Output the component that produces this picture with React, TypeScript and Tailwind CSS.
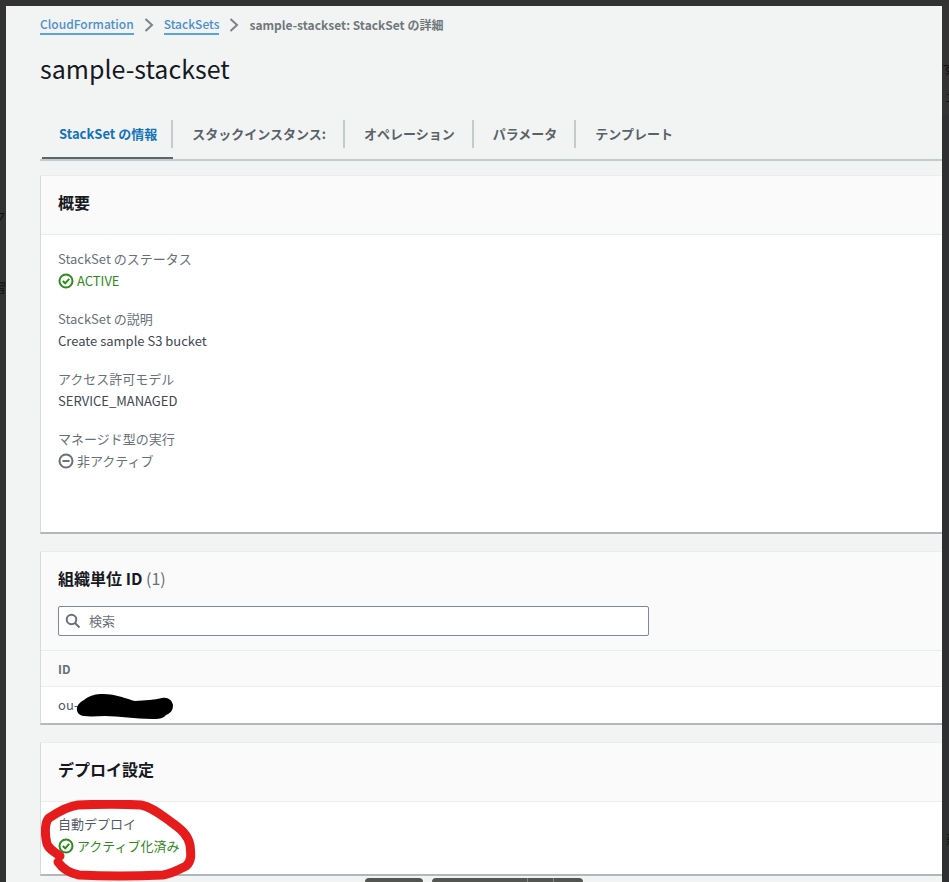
import React from "react";

type Status = "success" | "inactive";

type Field = { label: string; value: string; status?: Status };

const tabs = ["スタックインスタンス:", "オペレーション", "パラメータ", "テンプレート"];

const overview: Field[] = [
  { label: "StackSet のステータス", value: "ACTIVE", status: "success" },
  { label: "StackSet の説明", value: "Create sample S3 bucket" },
  { label: "アクセス許可モデル", value: "SERVICE_MANAGED" },
  { label: "マネージド型の実行", value: "非アクティブ", status: "inactive" },
];

function StatusIcon({ status }: { status: Status }) {
  return (
    <svg viewBox="0 0 16 16" className="size-4 shrink-0" fill="none" stroke="currentColor" strokeWidth="2" aria-hidden="true">
      <circle cx="8" cy="8" r="6.5" />
      {status === "success" ? <path d="M4.8 8 7.2 10.3 11.2 5.9" /> : <path d="M4.5 8h7" />}
    </svg>
  );
}

function Chevron() {
  return (
    <svg viewBox="0 0 10 16" className="h-4 w-[10px]" fill="none" stroke="#7b8487" strokeWidth="2" aria-hidden="true">
      <path d="M1.5 2 8 8l-6.500 6" />
    </svg>
  );
}

function FieldValue({ value, status }: { value: string; status?: Status }) {
  if (!status) return <dd className="text-[#414750]">{value}</dd>;
  return (
    <dd className={status === "success" ? "flex items-center gap-[3px] text-[#2f8a1b]" : "flex items-center gap-[3px] text-[#687078]"}>
      <StatusIcon status={status} />
      {value}
    </dd>
  );
}

function Card({ children }: { children: React.ReactNode }) {
  return <section className="border-b-2 border-l border-b-[#b0b8b9] border-l-[#d5dbdb] border-t border-t-[#eaeded] bg-white">{children}</section>;
}

function CardTitle({ children }: { children: React.ReactNode }) {
  return <h2 className="text-base leading-6 font-bold text-[#16191f]">{children}</h2>;
}

export default function App() {
  return (
    <div className="relative grid min-h-screen grid-cols-[6px_minmax(0,1fr)_7px] overflow-hidden bg-[#323232] pt-[6px] font-['Noto_Sans_CJK_JP',sans-serif] text-[13px] leading-[22px]">
      <div className="relative overflow-hidden text-[#101010]" aria-hidden="true">
        <span className="absolute top-[199px] right-0">ク</span>
        <span className="absolute top-[270px] right-0">習</span>
      </div>

      <main className="bg-[#f2f4f4] pb-[6px] pl-[34px]">
        <nav aria-label="Breadcrumb" className="pt-2 text-xs">
          <ol className="flex items-center gap-[10px]">
            <li>
              <a href="#cloudformation" className="block border-b-2 border-[#5ba3d9] leading-[18px] font-medium text-[#4d8fca]">CloudFormation</a>
            </li>
            <li><Chevron /></li>
            <li>
              <a href="#stacksets" className="block border-b-2 border-[#5ba3d9] leading-[18px] font-medium text-[#4d8fca]">StackSets</a>
            </li>
            <li><Chevron /></li>
            <li className="leading-[22px] font-bold text-[#70787b]" aria-current="page">sample-stackset: StackSet の詳細</li>
          </ol>
        </nav>

        <h1 className="mt-4 text-[25px] leading-8 text-[#16191f]">sample-stackset</h1>

        <div role="tablist" className="mt-9 flex border-b-2 border-[#c3cccd] font-bold text-[#5a6268]">
          <button role="tab" aria-selected="true" className="ml-[2px] border-b-2 border-[#5d656a] pb-[9px] text-[#1472ba]">
            <span className="block border-r-2 border-[#c3cccd] py-[3px] pr-[14px] pl-[17px]">StackSet の情報</span>
          </button>
          {tabs.map((tab, i) => (
            <button key={tab} role="tab" aria-selected="false" className="pb-[11px]">
              <span className={i < tabs.length - 1 ? "block border-r-2 border-[#c3cccd] py-[3px] pr-[17px] pl-[19px]" : "block py-[3px] pl-[19px]"}>{tab}</span>
            </button>
          ))}
        </div>

        <div className="mt-[14px] flex flex-col gap-[17px]">
          <Card>
            <div className="border-b border-[#eaeded] bg-[#fafafa] px-[17px] pt-[14px] pb-5">
              <CardTitle>概要</CardTitle>
            </div>
            <dl className="flex flex-col gap-4 px-[17px] pt-[13px] pb-[60px]">
              {overview.map((field) => (
                <div key={field.label}>
                  <dt className="text-[#687078]">{field.label}</dt>
                  <FieldValue value={field.value} status={field.status} />
                </div>
              ))}
            </dl>
          </Card>

          <Card>
            <div className="border-b border-[#eaeded] bg-[#fafafa] px-[17px] py-[14px]">
              <CardTitle>
                組織単位 ID <span className="font-normal text-[#687078]">(1)</span>
              </CardTitle>
              <div className="mt-4 flex h-[30px] w-full max-w-[591px] items-center gap-2 rounded-xs border border-[#7d8998] bg-white px-[6px]">
                <svg viewBox="0 0 16 16" className="size-4 shrink-0" fill="none" stroke="#687078" strokeWidth="2" aria-hidden="true">
                  <circle cx="6.500" cy="6.500" r="4.800" />
                  <path d="m10 10 4.500 4.500" />
                </svg>
                <input type="text" aria-label="検索" placeholder="検索" className="min-w-0 flex-1 bg-transparent outline-none placeholder:text-[#687078]" />
              </div>
            </div>
            <table className="w-full text-left">
              <thead>
                <tr className="border-b border-[#eaeded] bg-[#fafafa] text-xs leading-[22px]">
                  <th className="px-[17px] pt-[7px] pb-[6px] font-bold text-[#687078]">ID</th>
                </tr>
              </thead>
              <tbody>
                <tr>
                  <td className="px-[17px] py-[7px] text-[#545b64]">
                    <span className="relative">
                      ou-
                      <svg viewBox="0 0 97 27" className="absolute -top-[2px] left-[18px] h-[27px] w-[97px]" aria-hidden="true">
                        <path d="M8 7C14 2 20 1 27 1c13 0 24 5 32 7 10-1 19-1 27-3 6-1 10 2 11 7 0 5-2 8-7 10-3 4-8 4-14 4-17 0-33-3-47-3-7 0-14 1-21 0C-1 22-2 12 8 7Z" fill="#000" />
                      </svg>
                    </span>
                  </td>
                </tr>
              </tbody>
            </table>
          </Card>

          <Card>
            <div className="border-b border-[#eaeded] bg-[#fafafa] px-[17px] pt-[14px] pb-5">
              <CardTitle>デプロイ設定</CardTitle>
            </div>
            <dl className="relative px-[17px] pt-[11px] pb-[17px]">
              <dt className="text-[#545b64]">自動デプロイ</dt>
              <FieldValue value="アクティブ化済み" status="success" />
              <svg viewBox="0 0 156 82" className="absolute -top-[2px] left-0 h-[82px] w-[156px]" fill="none" stroke="#e61c1c" strokeWidth="9" strokeLinecap="round" strokeLinejoin="round" aria-hidden="true">
                <path d="M19 56C13 52 8 49 6 44 4 36 3 23 8 18 17 12 28 6 37 5 58 4 83 4 100 5 111 7 120 15 130 22 140 29 147 35 149 45 150 54 151 61 145 66 137 70 130 74 122 75 98 76 58 76 38 75 28 73 21 68 17 62" />
              </svg>
            </dl>
          </Card>
        </div>
      </main>

      <div className="relative overflow-hidden bg-[#2e3031] text-[#101010]" aria-hidden="true">
        <div className="h-[109px] bg-[#333333]" />
        <span className="absolute top-[51px] left-0">す</span>
        <span className="absolute top-[80px] left-[3px]">エ</span>
        <span className="absolute top-[822px] left-1">薪</span>
      </div>

      <div className="absolute bottom-0 left-[365px] flex gap-[9px]" aria-hidden="true">
        <div className="h-1 w-[58px] rounded-t-sm bg-[#545652]" />
        <div className="flex h-1 w-[151px] divide-x divide-[#858783] overflow-hidden rounded-t-sm bg-[#545652]">
          <div className="w-24" />
          <div className="w-[26px]" />
          <div className="flex-1" />
        </div>
      </div>
    </div>
  );
}
